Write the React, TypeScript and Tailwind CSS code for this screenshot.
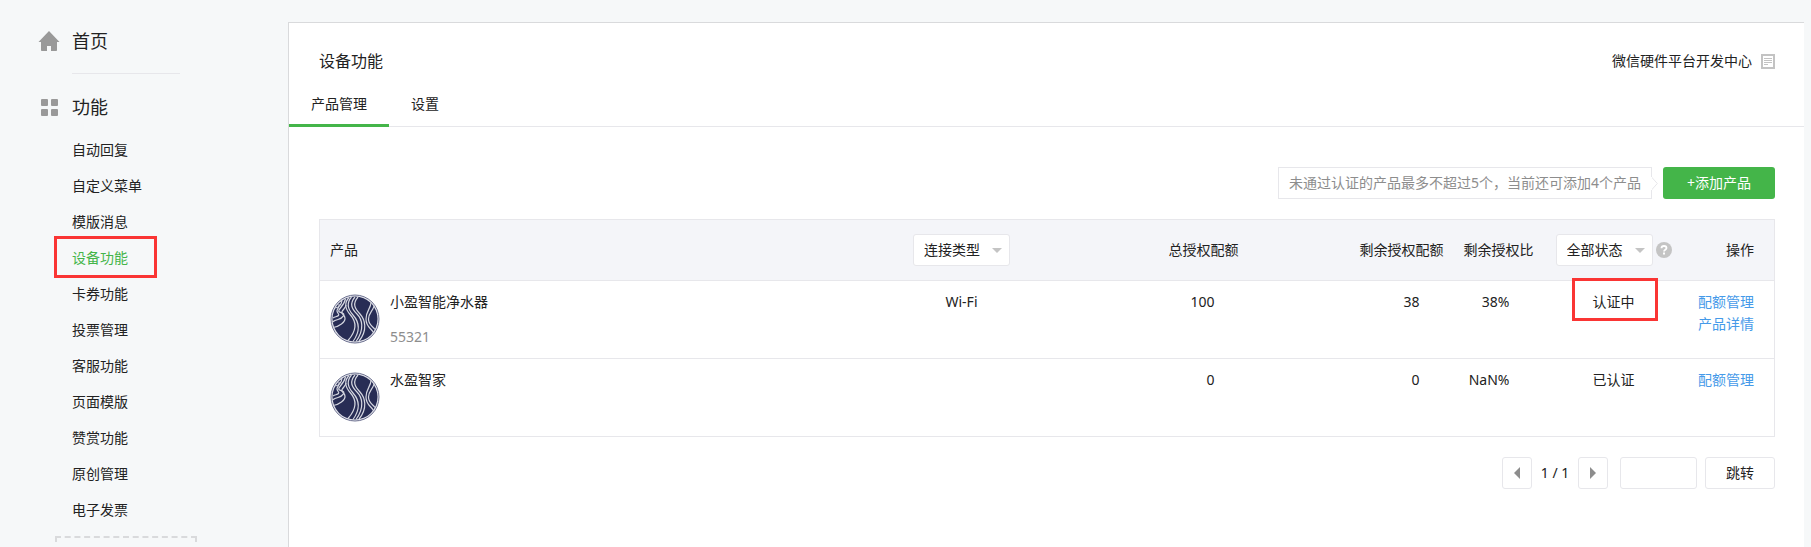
import { useState } from "react";

const menu = [
  "自动回复",
  "自定义菜单",
  "模版消息",
  "设备功能",
  "卡券功能",
  "投票管理",
  "客服功能",
  "页面模版",
  "赞赏功能",
  "原创管理",
  "电子发票",
];

const products = [
  { name: "小盈智能净水器", id: "55321", type: "Wi-Fi", total: "100", left: "38", ratio: "38%", status: "认证中", marked: true, actions: ["配额管理", "产品详情"] },
  { name: "水盈智家", id: "", type: "", total: "0", left: "0", ratio: "NaN%", status: "已认证", marked: false, actions: ["配额管理"] },
];

function HomeIcon() {
  return (
    <svg width="22" height="20" viewBox="0 0 22 20" fill="#999" aria-hidden="true">
      <path d="M11 0 21.500 11H19v8.200c0 .5-.3.8-.8.8H13v-5H9v5H3.800c-.5 0-.8-.3-.8-.8V11H.5Z" />
    </svg>
  );
}

function GridIcon() {
  return (
    <svg width="18" height="18" viewBox="0 0 18 18" fill="#999" aria-hidden="true">
      <rect x="1" y="1" width="7" height="7" rx="1" />
      <rect x="11" y="1" width="7" height="7" rx="1" />
      <rect x="1" y="11" width="7" height="7" rx="1" />
      <rect x="11" y="11" width="7" height="7" rx="1" />
    </svg>
  );
}

function DocIcon() {
  return (
    <svg width="14" height="15" viewBox="0 0 14 15" fill="none" stroke="#c3c3c3" aria-hidden="true">
      <rect x="1" y="1" width="12" height="13" strokeWidth="2" />
      <path d="M3 4.500h8M3 6.500h8M3 8.500h8M3 10.500h4" />
    </svg>
  );
}

function HelpIcon() {
  return (
    <svg width="16" height="16" viewBox="0 0 16 16" fill="none" aria-hidden="true">
      <circle cx="8" cy="8" r="8" fill="#c4c4c4" />
      <path d="M5.500 6.300C5.500 4.800 6.600 4 8 4s2.500.8 2.500 2.100C10.500 7.700 8 7.800 8 9.500" stroke="#fff" strokeWidth="1.800" />
      <path d="M7 10.600h2v1.800H7z" fill="#fff" />
    </svg>
  );
}

function Logo() {
  return (
    <svg className="shrink-0" width="50" height="50" viewBox="0 0 50 50" fill="none" aria-hidden="true">
      <circle cx="25" cy="25" r="24" fill="#e4e5ec" stroke="#6d7190" strokeWidth="1" />
      <circle cx="25" cy="25" r="22.500" fill="#282d55" />
      <g stroke="#d5d7e0" strokeWidth="1.200">
        {/* river */}
        <path d="M19 3.500C13 10 16 16 20.500 21S29 34 18 46.500" />
        <path d="M21.500 3C15.500 10 18.500 16 23 21S32 35 23 47.500" />
        <path d="M25 3C19 10 22 15 27 20S35 35 26 47.500" />
        <path d="M28 3C22 10 25 14.500 30 20S38 36 29 47" />
        {/* left bank */}
        <path d="M5.500 14C10 13 11.500 9.500 12 6.500" />
        <path d="M15.500 5C14.500 9 13 11 10 14.500S9.500 18 12.500 19 13 24 8 25.500 4 27 2.500 28" />
        <path d="M3 33.500C9 33 15.500 28 15 24S10.500 20 12 17.500 15.500 14 16 11" />
        <path d="M9 10C10 13 7.500 14 7 16.500S10 20 8.500 21.500 5 22.500 3 24" />
        {/* right bank */}
        <path d="M41 8.500C41 14 36 17 36 25S41 34 43.500 38.500" />
        <path d="M44 12C43 17 38.500 19 38.500 25S42.500 32 45 35.500" />
      </g>
    </svg>
  );
}

function Filter({ label, options }: { label: string; options: string[] }) {
  return (
    <span className="relative inline-block">
      <select
        aria-label={label}
        className="block h-8 w-[97px] appearance-none rounded-[3px] border border-[#e7e7eb] bg-white pl-[10px] text-sm outline-none"
      >
        <option>{label}</option>
        {options.map((o) => (
          <option key={o}>{o}</option>
        ))}
      </select>
      <svg className="pointer-events-none absolute right-2 top-3.5" width="10" height="5" viewBox="0 0 10 5" aria-hidden="true">
        <path d="M0 0h10L5 5z" fill="#c4c4c4" />
      </svg>
    </span>
  );
}

export default function App() {
  const [active, setActive] = useState("设备功能");
  const [page, setPage] = useState("");

  return (
    <div
      lang="zh-CN"
      className="flex h-screen overflow-hidden bg-[#f6f8f9] pr-[7px] font-['Noto_Sans','Noto_Sans_CJK_SC',sans-serif] text-sm text-[#222]"
    >
      {/* Sidebar */}
      <nav className="w-72 shrink-0 pt-[27px]">
        <a href="#home" className="flex h-7 items-center pl-[38px] text-lg">
          <span className="w-[34px]"><HomeIcon /></span>
          首页
        </a>
        <hr className="ml-[72px] mt-[18px] w-[108px] border-[#e7e7eb]" />
        <div className="mt-[19px] flex h-7 items-center pl-10 text-lg">
          <span className="w-8"><GridIcon /></span>
          <h2>功能</h2>
        </div>
        <ul className="mt-[11px] leading-9">
          {menu.map((item) => (
            <li key={item} className="relative pl-[72px]">
              <a
                href="#menu"
                onClick={() => setActive(item)}
                className={item === active ? "block text-[#44b549]" : "block"}
              >
                {item}
              </a>
              {item === "设备功能" && (
                <span className="pointer-events-none absolute -top-1 left-[54px] h-[42px] w-[103px] border-3 border-[#fa3534]" />
              )}
            </li>
          ))}
        </ul>
        <div className="ml-[55px] mt-2 h-10 w-[142px] border-2 border-dashed border-[#d9dadc]" />
      </nav>

      {/* Main panel */}
      <main className="mt-[22px] min-w-0 flex-1 border-l border-t border-[#d9dadc] bg-white">
        <header className="flex items-center justify-between pl-[30px] pr-[29px] pt-[26px]">
          <h1 className="text-base">设备功能</h1>
          <a href="#center" className="flex items-center gap-[9px]">
            微信硬件平台开发中心
            <DocIcon />
          </a>
        </header>

        <div className="mt-[6px] flex border-b border-[#e7e7eb]">
          <a href="#products" className="-mb-px border-b-3 border-[#44b549] px-[22px] pb-[7px] pt-3 leading-[26px]">产品管理</a>
          <a href="#settings" className="px-[22px] pb-[7px] pt-3 leading-[26px]">设置</a>
        </div>

        <div className="pl-[30px] pr-[29px] pt-10">
          <div className="flex justify-end gap-[11px]">
            <div className="relative flex h-8 items-center border border-[#e7e7eb] px-[10px] text-[#8d8d8d]">
              未通过认证的产品最多不超过5个，当前还可添加4个产品
              <svg className="absolute -right-[7px] top-[9px]" width="7" height="13" viewBox="0 0 7 13" fill="#fff" stroke="#e7e7eb" aria-hidden="true">
                <path d="M.5 0 6.300 6.500.5 13" />
                <path d="M.5 0v13" stroke="#fff" />
              </svg>
            </div>
            <button className="h-8 w-28 rounded-[3px] bg-[#44b549] text-white">+添加产品</button>
          </div>

          <table className="mt-5 w-full table-fixed border border-[#e7e7eb]">
            <thead className="bg-[#f4f5f9]">
              <tr className="h-[61px] border-b border-[#e7e7eb]">
                <th className="pl-[10px] text-left font-normal">产品</th>
                <th className="w-[200px] font-normal">
                  <Filter label="连接类型" options={["Wi-Fi", "蓝牙"]} />
                </th>
                <th className="w-[187px] pr-[10px] text-right font-normal">总授权配额</th>
                <th className="w-[205px] pr-[10px] text-right font-normal">剩余授权配额</th>
                <th className="w-[90px] pr-[10px] text-right font-normal">剩余授权比</th>
                <th className="w-[140px] font-normal">
                  <div className="flex items-center justify-center gap-[3px]">
                    <Filter label="全部状态" options={["认证中", "已认证"]} />
                    <HelpIcon />
                  </div>
                </th>
                <th className="w-[91px] pr-5 text-right font-normal">操作</th>
              </tr>
            </thead>
            <tbody className="align-top leading-[22px]">
              {products.map((p) => (
                <tr key={p.name} className="h-[78px] border-b border-[#e7e7eb]">
                  <td className="pl-[10px]">
                    <div className="flex gap-[10px]">
                      <span className="pt-[13px]"><Logo /></span>
                      <div className="pt-[10px]">
                        <p>{p.name}</p>
                        <p className="mt-[13px] text-[#8d8d8d]">{p.id}</p>
                      </div>
                    </div>
                  </td>
                  <td className="pt-[10px] text-center">{p.type}</td>
                  <td className="pr-[34px] pt-[10px] text-right">{p.total}</td>
                  <td className="pr-[34px] pt-[10px] text-right">{p.left}</td>
                  <td className="pr-[34px] pt-[10px] text-right">{p.ratio}</td>
                  <td className="pt-[10px] text-center">
                    <span className="relative">
                      {p.status}
                      {p.marked && (
                        <span className="pointer-events-none absolute -left-[21px] -top-[14px] h-[43px] w-[86px] border-3 border-[#fa3534]" />
                      )}
                    </span>
                  </td>
                  <td className="pr-5 pt-[10px] text-right text-[#459ae9]">
                    {p.actions.map((a) => (
                      <a key={a} href="#action" className="block">{a}</a>
                    ))}
                  </td>
                </tr>
              ))}
            </tbody>
          </table>

          {/* Pagination */}
          <div className="mt-5 flex items-center justify-end">
            <button aria-label="上一页" className="flex h-8 w-[30px] items-center justify-center rounded-[3px] border border-[#e7e7eb]">
              <svg width="6" height="12" viewBox="0 0 6 12" fill="#8d8d8d"><path d="M6 0v12L0 6z" /></svg>
            </button>
            <span className="w-[46px] text-center">1 / 1</span>
            <button aria-label="下一页" className="flex h-8 w-[30px] items-center justify-center rounded-[3px] border border-[#e7e7eb]">
              <svg width="6" height="12" viewBox="0 0 6 12" fill="#8d8d8d"><path d="M0 0v12l6-6z" /></svg>
            </button>
            <input
              aria-label="页码"
              value={page}
              onChange={(e) => setPage(e.target.value)}
              className="ml-3 h-8 w-[77px] rounded-[3px] border border-[#e7e7eb] px-2 outline-none"
            />
            <button className="ml-2 h-8 w-[70px] rounded-[3px] border border-[#e7e7eb]">跳转</button>
          </div>
        </div>
      </main>
    </div>
  );
}
